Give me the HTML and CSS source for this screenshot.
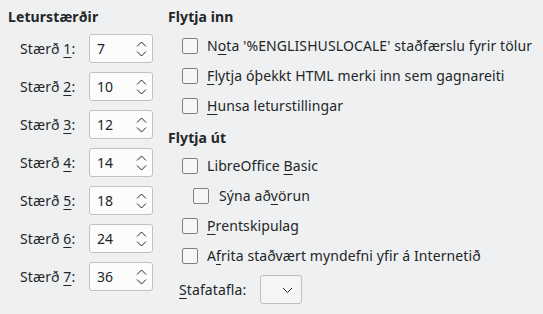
FILE: index.html
```html
<!DOCTYPE html>
<html lang="is">

<head>
    <meta charset="UTF-8">
    <title>HTML-skjal</title>
    <link rel="stylesheet" href="styles.css">
</head>

<body>
    <div class="page">
        <!-- leturstærðir -->
        <div class="sizes">
            <div class="title">Leturstærðir</div>
            <div class="size-grid">
                <label>Stærð <u>1</u>:</label>
                <div class="spin"><span>7</span><svg width="11" height="16" viewBox="0 0 11 16"><path d="M1 5.5 L5.5 1 L10 5.5 M1 10.5 L5.5 15 L10 10.5" fill="none" stroke="#232627" stroke-width="1"/></svg></div>
                <label>Stærð <u>2</u>:</label>
                <div class="spin"><span>10</span><svg width="11" height="16" viewBox="0 0 11 16"><path d="M1 5.5 L5.5 1 L10 5.5 M1 10.5 L5.5 15 L10 10.5" fill="none" stroke="#232627" stroke-width="1"/></svg></div>
                <label>Stærð <u>3</u>:</label>
                <div class="spin"><span>12</span><svg width="11" height="16" viewBox="0 0 11 16"><path d="M1 5.5 L5.5 1 L10 5.5 M1 10.5 L5.5 15 L10 10.5" fill="none" stroke="#232627" stroke-width="1"/></svg></div>
                <label>Stærð <u>4</u>:</label>
                <div class="spin"><span>14</span><svg width="11" height="16" viewBox="0 0 11 16"><path d="M1 5.5 L5.5 1 L10 5.5 M1 10.5 L5.5 15 L10 10.5" fill="none" stroke="#232627" stroke-width="1"/></svg></div>
                <label>Stærð <u>5</u>:</label>
                <div class="spin"><span>18</span><svg width="11" height="16" viewBox="0 0 11 16"><path d="M1 5.5 L5.5 1 L10 5.5 M1 10.5 L5.5 15 L10 10.5" fill="none" stroke="#232627" stroke-width="1"/></svg></div>
                <label>Stærð <u>6</u>:</label>
                <div class="spin"><span>24</span><svg width="11" height="16" viewBox="0 0 11 16"><path d="M1 5.5 L5.5 1 L10 5.5 M1 10.5 L5.5 15 L10 10.5" fill="none" stroke="#232627" stroke-width="1"/></svg></div>
                <label>Stærð <u>7</u>:</label>
                <div class="spin"><span>36</span><svg width="11" height="16" viewBox="0 0 11 16"><path d="M1 5.5 L5.5 1 L10 5.5 M1 10.5 L5.5 15 L10 10.5" fill="none" stroke="#232627" stroke-width="1"/></svg></div>
            </div>
        </div>

        <!-- flytja inn / út -->
        <div class="options">
            <div class="title">Flytja inn</div>
            <div class="check"><span class="box"></span><span>N<u>o</u>ta '%ENGLISHUSLOCALE' staðfærslu fyrir tölur</span></div>
            <div class="check"><span class="box"></span><span><u>F</u>lytja óþekkt HTML merki inn sem gagnareiti</span></div>
            <div class="check"><span class="box"></span><span><u>H</u>unsa leturstillingar</span></div>

            <div class="title second">Flytja út</div>
            <div class="check"><span class="box"></span><span>LibreOffice <u>B</u>asic</span></div>
            <div class="check sub"><span class="box"></span><span>Sýna að<u>v</u>örun</span></div>
            <div class="check"><span class="box"></span><span><u>P</u>rentskipulag</span></div>
            <div class="check"><span class="box"></span><span>A<u>f</u>rita staðvært myndefni yfir á Internetið</span></div>
            <div class="charset">
                <label><u>S</u>tafatafla:</label>
                <div class="combo"><svg width="11" height="7" viewBox="0 0 11 7"><path d="M1 1 L5.5 5.5 L10 1" fill="none" stroke="#232627" stroke-width="1"/></svg></div>
            </div>
        </div>
    </div>
</body>

</html>
```

FILE: styles.css
```css
* {
    margin: 0;
    padding: 0;
    box-sizing: border-box;
}

body {
    background: #eff0f1;
    color: #232627;
    font-family: "Noto Sans", sans-serif;
    font-size: 14px;
    line-height: 18px;
    letter-spacing: 0.1px;
}

u {
    text-decoration-thickness: 1px;
    text-underline-offset: 3px;
}

.page {
    display: flex;
    padding: 8px 0 0 8px;
}

.title {
    font-weight: bold;
    height: 18px;
}

/* left column */
.sizes {
    width: 160px;
}

.size-grid {
    display: grid;
    grid-template-columns: 69px 64px;
    row-gap: 9px;
    margin-top: 8px;
    padding-left: 12px;
}

.size-grid label {
    align-self: center;
}

.spin {
    height: 29px;
    background: #fcfcfc;
    border: 1px solid #bfc1c3;
    border-radius: 3px;
    display: flex;
    align-items: center;
    justify-content: space-between;
    padding: 0 5px 0 7px;
}

/* right column */
.options {
    display: flex;
    flex-direction: column;
}

.options .title:first-child {
    margin-bottom: 5px;
}

.title.second {
    margin-top: 8px;
    margin-bottom: 4px;
}

.check {
    height: 30px;
    display: flex;
    align-items: center;
    padding-left: 14px;
    white-space: nowrap;
}

.check.sub {
    padding-left: 25px;
}

.box {
    width: 16px;
    height: 16px;
    border: 1px solid #7f8184;
    border-radius: 2px;
    background: #f6f6f7;
    margin-right: 9px;
    flex-shrink: 0;
}

.check.sub .box {
    margin-right: 10px;
}

.charset {
    display: flex;
    align-items: center;
    padding-left: 11px;
    margin-top: 4px;
}

.charset label {
    margin-right: 14px;
}

.combo {
    width: 42px;
    height: 29px;
    background: #f4f5f5;
    border: 1px solid #bcbec0;
    border-radius: 3px;
    display: flex;
    align-items: center;
    justify-content: flex-end;
    padding: 1px 8px 0 0;
}
```
